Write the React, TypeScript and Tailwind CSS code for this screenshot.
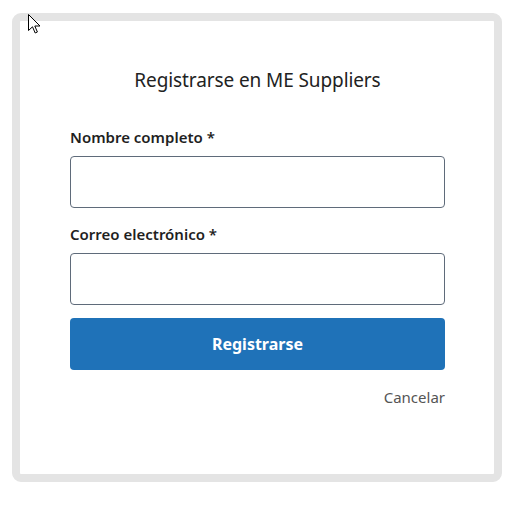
export default function App() {
  return (
    <div
      className="relative w-[523px] h-[508px] bg-white pl-[12px] pt-[13px]"
      style={{ fontFamily: '"Noto Sans", "Open Sans", sans-serif' }}
    >
      <div className="w-[490px] h-[469px] rounded-[9px] border-[8px] border-[#e4e4e4] bg-white pl-[50px] pr-[49px] pt-[44px]">
        <h1 className="text-center text-[19px] leading-[30px] text-[#222] tracking-[-0.1px]">Registrarse en ME Suppliers</h1>

        <form className="mt-[31px] flex flex-col">
          <label className="text-[15px] leading-[22px] font-semibold text-[#1f1f1f]">Nombre completo *</label>
          <input className="mt-[8px] h-[52px] w-full rounded-[4px] border border-[#5f6b7a] bg-white" />

          <label className="mt-[15px] text-[15px] leading-[22px] font-semibold text-[#1f1f1f]">Correo electrónico *</label>
          <input className="mt-[8px] h-[52px] w-full rounded-[4px] border border-[#5f6b7a] bg-white" />

          <button
            type="button"
            className="mt-[13px] h-[52px] w-full rounded-[4px] bg-[#1f72b8] text-[16px] font-bold text-white"
          >
            Registrarse
          </button>

          <div className="mt-[16px] flex justify-end">
            <a className="text-[15px] leading-[22px] text-[#555]">Cancelar</a>
          </div>
        </form>
      </div>

      <svg className="absolute left-[28px] top-[14px]" width="13" height="20" viewBox="0 0 13 20">
        <path d="M0.5 0.5 L0.5 16.5 L4.5 12.8 L7.2 19 L9.4 18 L6.8 12 L12 12 Z" fill="white" stroke="black" strokeWidth="1" strokeLinejoin="round" />
      </svg>
    </div>
  )
}
